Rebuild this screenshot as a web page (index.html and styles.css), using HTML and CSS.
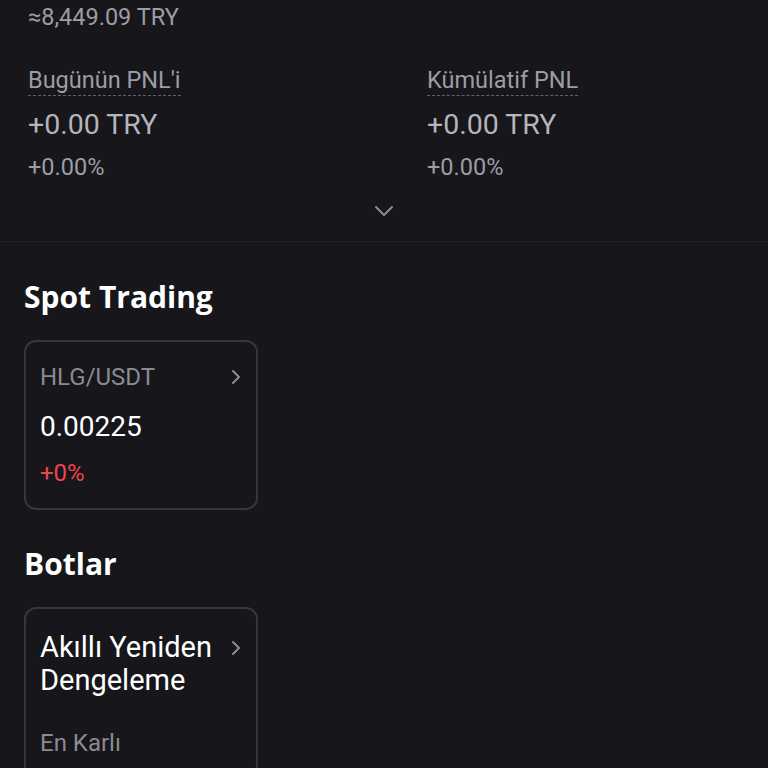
FILE: index.html
```html
<!DOCTYPE html>
<html lang="tr">
<head>
    <meta charset="UTF-8">
    <meta name="viewport" content="width=device-width, initial-scale=1.0">
    <title>Varlıklar</title>
    <link rel="stylesheet" href="styles.css">
</head>
<body>
    <div class="summary">
        <p class="approx">≈8,449.09 TRY</p>
        <div class="pnl-row">
            <div class="pnl">
                <span class="pnl-label">Bugünün PNL'i</span>
                <p class="pnl-value">+0.00 TRY</p>
                <p class="pnl-rate">+0.00%</p>
            </div>
            <div class="pnl">
                <span class="pnl-label">Kümülatif PNL</span>
                <p class="pnl-value">+0.00 TRY</p>
                <p class="pnl-rate">+0.00%</p>
            </div>
        </div>
        <div class="toggle">
            <svg width="20" height="12" viewBox="0 0 20 12"><path d="M2 2l8 8 8-8" fill="none" stroke="#8c8c94" stroke-width="2" stroke-linecap="round" stroke-linejoin="round"/></svg>
        </div>
    </div>

    <div class="section">
        <h2>Spot Trading</h2>
        <div class="card">
            <div class="card-head">
                <span class="pair">HLG/USDT</span>
                <svg class="arrow" width="12" height="18" viewBox="0 0 12 18"><path d="M3 3l6 6-6 6" fill="none" stroke="#8c8c94" stroke-width="2" stroke-linecap="round" stroke-linejoin="round"/></svg>
            </div>
            <p class="price">0.00225</p>
            <p class="change">+0%</p>
        </div>
    </div>

    <div class="section">
        <h2>Botlar</h2>
        <div class="card bot">
            <div class="card-head">
                <span class="bot-name">Akıllı Yeniden Dengeleme</span>
                <svg class="arrow" width="12" height="18" viewBox="0 0 12 18"><path d="M3 3l6 6-6 6" fill="none" stroke="#8c8c94" stroke-width="2" stroke-linecap="round" stroke-linejoin="round"/></svg>
            </div>
            <p class="bot-tag">En Karlı</p>
        </div>
    </div>
</body>
</html>
```

FILE: styles.css
```css
*{box-sizing:border-box;margin:0;padding:0;}
body{background:#16161b;color:#fff;font-family:Roboto, 'Noto Sans', sans-serif;overflow:hidden;}
.summary{padding:3px 28px 0;height:242px;border-bottom:1px solid #202027;}
.approx{font-size:23.5px;line-height:28px;color:#9d9da5;}
.pnl-row{display:flex;margin-top:35px;}
.pnl{flex:0 0 399px;}
.pnl + .pnl{flex:1 1 auto;min-width:0;}
.pnl-label{display:inline-block;font-size:23.5px;line-height:28px;color:#9d9da5;padding-bottom:1px;border-bottom:1.5px dashed #62626a;}
.pnl-value{margin-top:12px;font-size:28.5px;line-height:34px;font-weight:400;color:#b4b4bc;}
.pnl-rate{margin-top:11px;font-size:23.5px;line-height:28px;color:#9d9da5;}
.toggle{display:flex;justify-content:center;margin-top:24px;}
.section{padding:0 24px;}
.section h2{margin-top:37px;font-family:'Open Sans', Roboto, sans-serif;font-size:30px;line-height:36px;font-weight:700;color:#fff;}
.section + .section h2{margin-top:36px;}
.card{width:234px;margin-top:25px;padding:20px 14px 0 14px;border:2px solid #36363c;border-radius:12px;height:170px;}
.card-head{display:flex;justify-content:space-between;align-items:flex-start;}
.pair{font-size:24px;line-height:30px;color:#8a8a92;}
.arrow{margin-top:6px;flex-shrink:0;}
.price{margin-top:18px;font-size:28px;line-height:34px;color:#fff;}
.change{margin-top:15px;font-size:24px;line-height:28px;color:#ef4450;}
.bot{height:auto;padding-top:22px;padding-bottom:20px;}
.bot-name{font-size:29px;line-height:33px;color:#fff;width:190px;}
.bot .arrow{margin-top:8px;}
.bot-tag{margin-top:32px;font-size:24px;line-height:28px;color:#8a8a92;}
```
